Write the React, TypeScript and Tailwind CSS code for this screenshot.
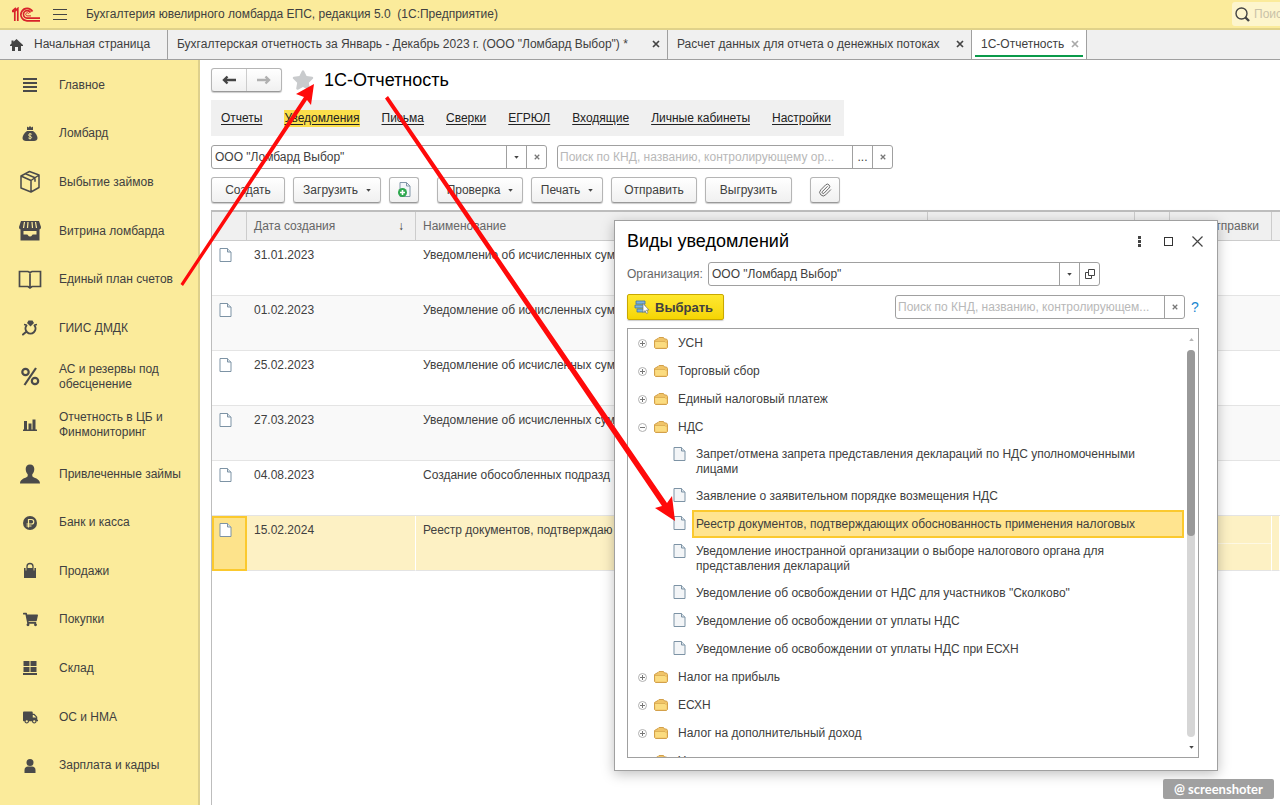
import type { ReactNode } from "react";
import { FaShoppingCart, FaTruck, FaStar } from "react-icons/fa";
import { Paperclip } from "lucide-react";

const INK = "#4a4a4a";

interface MenuItem {
  label: string;
  icon: ReactNode;
}

interface NoticeRow {
  date: string;
  name: string;
  selected?: boolean;
}

interface TreeItem {
  label: string;
  type: "folder" | "open" | "doc";
  selected?: boolean;
}

function Icon({ children, size = 24 }: { children: ReactNode; size?: number }) {
  return (
    <svg width={size} height={size} viewBox="0 0 24 24" fill={INK} aria-hidden="true">
      {children}
    </svg>
  );
}

const menu: MenuItem[] = [
  {
    label: "Главное",
    icon: (
      <Icon>
        <path d="M5 5h14v2H5zM5 9h14v2H5zM5 13h14v2H5zM5 17h14v2H5z" />
      </Icon>
    ),
  },
  {
    label: "Ломбард",
    icon: (
      <Icon>
        <path d="M9 4.500 10.500 5.500 12 4l1.500 1.500L15 4.500V8H9z" />
        <path d="M9 9h6c2.500 2 4.500 4.500 4.500 7 0 2-1.500 3-3.500 3H8c-2 0-3.500-1-3.500-3C4.500 13.500 6.500 11 9 9z" />
        <path d="M13.800 12.300c-1.500-1-3.200-.4-3.200.8 0 1.600 3 .8 3 2.300 0 1.200-2 1.500-3.300.5M12 11v6.500" fill="none" stroke="#fbeb9b" strokeWidth="0.900" />
      </Icon>
    ),
  },
  {
    label: "Выбытие займов",
    icon: (
      <Icon>
        <path
          d="M11.500 1.500 21 5v12.500L13 22 3 18V6zM3 6l10 4.500L21 5M13 10.500V22M7.500 3.800l9.500 4v4"
          fill="none"
          stroke={INK}
          strokeWidth="1.500"
          strokeLinejoin="round"
        />
      </Icon>
    ),
  },
  {
    label: "Витрина ломбарда",
    icon: (
      <Icon>
        <path d="M3 2h18l2 6c0 1.800-1 2.500-2 2.500H3C2 10.500 1 9.800 1 8z" />
        <path d="M6.500 3 5.500 9M10 3 9.500 9M14 3l.5 6M17.500 3l1 6" stroke="#fbeb9b" strokeWidth="1.200" />
        <path d="M2.500 10h19v11.500h-19z" />
        <path d="M5.500 12h13v3.500h-3.500c-1 0-1 2-3 2s-2-2-3-2H5.500z" fill="#fbeb9b" />
      </Icon>
    ),
  },
  {
    label: "Единый план счетов",
    icon: (
      <Icon>
        <path
          d="M1.500 3.500H10l2 1 2-1h8.500v15H14L12 20l-2-1.500H1.500zM12 4.500V20"
          fill="none"
          stroke={INK}
          strokeWidth="1.700"
        />
      </Icon>
    ),
  },
  {
    label: "ГИИС ДМДК",
    icon: (
      <Icon>
        <path d="M9 7l1.500-2.500h4L16 7l-3.500 3.500z" />
        <path d="M8.500 9.500a5 5 0 1 0 8 0M8 16l-3 2.500" fill="none" stroke={INK} strokeWidth="2" strokeLinecap="round" />
        <path d="M6 8.500l2.500.5M19 8.500l-2.500.5" stroke={INK} strokeWidth="1.500" />
      </Icon>
    ),
  },
  {
    label: "АС и резервы под обесценение",
    icon: (
      <Icon>
        <g fill="none" stroke={INK} strokeWidth="2.200">
          <circle cx="7.500" cy="7" r="3.200" />
          <circle cx="17" cy="16" r="3.200" />
          <path d="M18 3 6.500 20" />
        </g>
      </Icon>
    ),
  },
  {
    label: "Отчетность в ЦБ и Финмониторинг",
    icon: (
      <Icon>
        <path d="M6 8h3v9H6zM10.500 10.500h3V17h-3zM14.500 6.500h3V17h-3zM5 16.500h14v1.500H5z" />
      </Icon>
    ),
  },
  {
    label: "Привлеченные займы",
    icon: (
      <Icon>
        <path d="M12 2.500c2.800 0 4.300 1.800 4.300 4.500 0 2.300-.8 4-2 5.200v2.100c1 1.700 7.700 2.200 7.700 7.200H2c0-5 6.700-5.500 7.700-7.200v-2.100c-1.200-1.200-2-2.900-2-5.200 0-2.700 1.500-4.500 4.300-4.500z" />
      </Icon>
    ),
  },
  {
    label: "Банк и касса",
    icon: (
      <Icon>
        <circle cx="12" cy="12" r="7" />
        <path d="M10.500 16.500V8.500h3a2 2 0 0 1 0 4.500H8.500M8.500 15h5" fill="none" stroke="#fbeb9b" strokeWidth="1.200" />
      </Icon>
    ),
  },
  {
    label: "Продажи",
    icon: (
      <Icon>
        <path d="M6 9h12v10H6z" />
        <path d="M9 11V7.500a3 3 0 0 1 6 0V11" fill="none" stroke={INK} strokeWidth="1.300" />
        <path d="M8 9v2.500M16 9v2.500" stroke="#fbeb9b" strokeWidth="0.800" />
      </Icon>
    ),
  },
  { label: "Покупки", icon: <FaShoppingCart size={15} color={INK} /> },
  {
    label: "Склад",
    icon: (
      <Icon>
        <path d="M5.500 5h6v5h-6zM12.500 5h6v5h-6zM5.500 11h6v5h-6zM12.500 11h6v5h-6zM5 17h14v2H5z" />
      </Icon>
    ),
  },
  { label: "ОС и НМА", icon: <FaTruck size={15} color={INK} /> },
  {
    label: "Зарплата и кадры",
    icon: (
      <Icon>
        <circle cx="12" cy="8.500" r="3.500" />
        <path d="M6.500 19v-3c0-2.200 1.500-3.500 3.500-3.500h4c2 0 3.500 1.300 3.500 3.500v3z" />
      </Icon>
    ),
  },
];

const sections = ["Отчеты", "Уведомления", "Письма", "Сверки", "ЕГРЮЛ", "Входящие", "Личные кабинеты", "Настройки"];

const rows: NoticeRow[] = [
  { date: "31.01.2023", name: "Уведомление об исчисленных сум" },
  { date: "01.02.2023", name: "Уведомление об исчисленных сум" },
  { date: "25.02.2023", name: "Уведомление об исчисленных сум" },
  { date: "27.03.2023", name: "Уведомление об исчисленных сум" },
  { date: "04.08.2023", name: "Создание обособленных подразд" },
  { date: "15.02.2024", name: "Реестр документов, подтверждаю", selected: true },
];

const tree: TreeItem[] = [
  { label: "УСН", type: "folder" },
  { label: "Торговый сбор", type: "folder" },
  { label: "Единый налоговый платеж", type: "folder" },
  { label: "НДС", type: "open" },
  { label: "Запрет/отмена запрета представления деклараций по НДС уполномоченными лицами", type: "doc" },
  { label: "Заявление о заявительном порядке возмещения НДС", type: "doc" },
  { label: "Реестр документов, подтверждающих обоснованность применения налоговых", type: "doc", selected: true },
  { label: "Уведомление иностранной организации о выборе налогового органа для представления деклараций", type: "doc" },
  { label: "Уведомление об освобождении от НДС для участников \"Сколково\"", type: "doc" },
  { label: "Уведомление об освобождении от уплаты НДС", type: "doc" },
  { label: "Уведомление об освобождении от уплаты НДС при ЕСХН", type: "doc" },
  { label: "Налог на прибыль", type: "folder" },
  { label: "ЕСХН", type: "folder" },
  { label: "Налог на дополнительный доход", type: "folder" },
  { label: "Уведомления", type: "folder" },
];

function Logo() {
  return (
    <svg width="28" height="15" viewBox="0 0 28 15" fill="none" stroke="#d8222a" strokeWidth="1.700" aria-hidden="true">
      <path d="M0 4.500h2.800V14M2.800 4.500 5.800 1.500V14M0.500 4 4 1" />
      <path d="M20.500 4.500A6.200 6.200 0 1 0 15 13.800H28" />
      <path d="M18.500 5.500A3.800 3.800 0 1 0 15 11.200H28" />
      <path d="M16.800 6.700a1.600 1.600 0 1 0-1.800 2.200h4" strokeWidth="1" />
    </svg>
  );
}

function CloseMark({ color = "#444", size = 8 }: { color?: string; size?: number }) {
  return (
    <svg width={size} height={size} viewBox="0 0 8 8" stroke={color} strokeWidth="1.700" aria-hidden="true">
      <path d="M1 1l6 6M7 1 1 7" />
    </svg>
  );
}

function Caret() {
  return (
    <svg width="5" height="3" viewBox="0 0 6 4" fill="#444" aria-hidden="true">
      <path d="M0 0h6L3 3.500z" />
    </svg>
  );
}

function DocIcon({ filled = false }: { filled?: boolean }) {
  return (
    <svg width="13" height="14" viewBox="0 0 13 14" className="shrink-0" aria-hidden="true">
      <path d="M1 .5h7.500l3.500 3.500v9.500H1z" fill={filled ? "#f3f5f7" : "#fff"} stroke="#7d93a5" />
      <path d="M8.500.5V4H12" fill="#dbe4ea" stroke="#7d93a5" />
    </svg>
  );
}

function FolderIcon() {
  return (
    <svg width="14" height="12" viewBox="0 0 14 12" className="shrink-0" aria-hidden="true">
      <path d="M.5 3.500 4 1.500l1-1h4.500l1 1.500h2l1 1.500v7l-1 1h-11l-1-1z" fill="#f0c468" stroke="#d3a04a" />
      <path d="M1 4.500h10.500l1 1v5H1.500z" fill="#fbdc80" />
      <path d="M1 4.500h10l1.500 1.500" fill="none" stroke="#d9a94f" strokeWidth="0.800" />
    </svg>
  );
}

function Expander({ open }: { open: boolean }) {
  return (
    <svg width="9" height="9" viewBox="0 0 9 9" fill="none" className="block shrink-0" aria-hidden="true">
      <circle cx="4.500" cy="4.500" r="4" stroke="#b0b0b0" />
      <path d={open ? "M2 4.500h5" : "M2 4.500h5M4.500 2v5"} stroke="#777" />
    </svg>
  );
}

function Tab({ label, active = false, className }: { label: string; active?: boolean; className: string }) {
  return (
    <div className={`flex items-stretch border-r border-[#a0a0a0] ${active ? "bg-white px-[3px]" : "px-[3px]"} ${className}`}>
      <div
        className={`flex flex-1 items-center justify-between px-[6px] pb-px ${
          active ? "mb-[2px] border-b-2 border-[#0a9a4a] pt-[4px] pr-[4px]" : "pr-[4px]"
        }`}
      >
        <button type="button" className="whitespace-nowrap">{label}</button>
        <button type="button" aria-label="Закрыть вкладку">
          <CloseMark color={active ? "#aaa" : "#444"} />
        </button>
      </div>
    </div>
  );
}

function ToolButton({ children, label, className = "" }: { children: ReactNode; label?: string; className?: string }) {
  return (
    <button
      type="button"
      aria-label={label}
      className={`flex h-[26px] items-center justify-center gap-2 rounded-[3px] border border-[#b5b5b5] border-b-[#999] bg-linear-to-b from-white to-[#f0f0f0] shadow-[0_1px_1px_#ccc] ${className}`}
    >
      {children}
    </button>
  );
}

const cellButton = "flex w-5 shrink-0 items-center justify-center border-l border-[#a0a0a0]";
const field = "flex h-6 rounded-[3px] border border-[#a0a0a0] bg-white";

function TopBar() {
  return (
    <header className="flex h-[30px] shrink-0 items-center border-b-2 border-[#e0d28a] bg-[#fbeb9b] pl-3">
      <Logo />
      <button type="button" aria-label="Меню" className="ml-[13px] flex flex-col gap-1">
        <span className="h-px w-[14px] bg-[#444]" />
        <span className="h-px w-[14px] bg-[#444]" />
        <span className="h-px w-[14px] bg-[#444]" />
      </button>
      <h1 className="ml-[19px] flex-1 whitespace-pre">Бухгалтерия ювелирного ломбарда ЕПС, редакция 5.0  (1С:Предприятие)</h1>
      <label className="flex h-6 w-12 items-center gap-1 overflow-hidden rounded-l-[3px] bg-[#fdf5cd] pl-[3px]">
        <svg width="15" height="15" viewBox="0 0 15 15" fill="none" stroke="#444" className="shrink-0" aria-hidden="true">
          <circle cx="6.500" cy="6.500" r="5.500" strokeWidth="1.400" />
          <path d="M10.500 10.500 14 14" strokeWidth="2.400" />
        </svg>
        <input type="search" aria-label="Поиск" placeholder="Поиск" className="w-12 shrink-0 bg-transparent placeholder:text-[#c9c2a8]" />
      </label>
    </header>
  );
}

function NotificationDialog() {
  return (
    <section
      role="dialog"
      aria-labelledby="dialog-title"
      className="absolute top-[220px] left-[614px] z-10 flex h-[551px] w-[604px] flex-col border border-[#a0a0a0] bg-white pr-[18px] pb-3 pl-3 shadow-[0_3px_12px_rgba(0,0,0,0.25)]"
    >
      <div className="flex h-[41px] items-center">
        <h2 id="dialog-title" className="flex-1 text-[18px] text-black">Виды уведомлений</h2>
        <div className="-mr-1 flex items-center gap-[19px]">
          <button type="button" aria-label="Еще" className="flex w-3 justify-center">
            <svg width="3" height="11" fill="#444" aria-hidden="true">
              <path d="M0 0h3v3H0zM0 4h3v3H0zM0 8h3v3H0z" />
            </svg>
          </button>
          <button type="button" aria-label="Развернуть" className="size-[9px] border border-[#333]" />
          <button type="button" aria-label="Закрыть">
            <svg width="11" height="11" viewBox="0 0 11 11" stroke="#444" strokeWidth="1.200" aria-hidden="true">
              <path d="M.5.5l10 10M10.500.5l-10 10" />
            </svg>
          </button>
        </div>
      </div>

      <div className="flex items-center">
        <label htmlFor="dialog-org" className="w-[81px] text-[#666]">Организация:</label>
        <div className={`${field} w-[392px]`}>
          <select id="dialog-org" className="min-w-0 flex-1 appearance-none px-[3px]">
            <option>ООО "Ломбард Выбор"</option>
          </select>
          <span className={cellButton}><Caret /></span>
          <button type="button" aria-label="Открыть" className={cellButton}>
            <svg width="10" height="10" viewBox="0 0 10 10" fill="none" stroke="#444" aria-hidden="true">
              <path d="M3.500.5h6v6h-6zM3 3.500H.5v6h6V7" />
            </svg>
          </button>
        </div>
      </div>

      <div className="mt-2 flex items-center">
        <button
          type="button"
          className="flex h-[26px] w-[97px] items-center gap-[5px] rounded-[2px] border border-[#c9a800] bg-linear-to-b from-[#ffe82e] to-[#f5d500] pl-[6px] text-[13px] font-bold shadow-[0_1px_1px_#ccc]"
        >
          <svg width="16" height="14" viewBox="0 0 16 14" aria-hidden="true">
            <path d="M2 1h9v3H2zM1 5h10v3H1zM3 9h9v3H3z" fill="#7fb2dc" stroke="#3f75a3" strokeWidth="0.800" />
            <path d="M9 3.500v9l2-2 1.500 3 1.500-.8-1.500-2.700H15z" fill="#fff" stroke="#777" strokeWidth="0.700" />
          </svg>
          Выбрать
        </button>
        <div className={`${field} ml-auto w-[290px]`}>
          <input
            type="text"
            aria-label="Поиск вида уведомления"
            placeholder="Поиск по КНД, названию, контролирующем..."
            className="min-w-0 flex-1 px-[2px] text-ellipsis placeholder:text-[#b8b8b8]"
          />
          <button type="button" aria-label="Очистить" className={cellButton}><CloseMark color="#777" size={6} /></button>
        </div>
        <a href="#help" aria-label="Справка" className="ml-[6px] w-[8px] text-[14px] text-[#1a86cf]">?</a>
      </div>

      <div className="mt-[8px] flex min-h-0 flex-1 border border-[#a0a0a0]">
        <ul className="min-w-0 flex-1 overflow-hidden">
          {tree.map((item) => (
            <TreeRow key={item.label} item={item} />
          ))}
        </ul>
        {/* Scrollbar */}
        <div className="flex w-[14px] flex-col items-center pt-[9px] pb-[8px]">
          <svg width="5" height="3" viewBox="0 0 6 4" fill="#b5b5b5" aria-hidden="true">
            <path d="M0 4h6L3 0z" />
          </svg>
          <div className="my-[9px] w-2 flex-1 rounded-full bg-[#d6d6d6]">
            <div className="h-[48%] rounded-full bg-[#999]" />
          </div>
          <Caret />
        </div>
      </div>
    </section>
  );
}

function TreeRow({ item }: { item: TreeItem }) {
  if (item.type === "doc") {
    return (
      <li className="flex items-start pl-[45px]">
        <span className="mt-[6px]"><DocIcon filled /></span>
        <button
          type="button"
          className={`ml-[6px] min-h-7 flex-1 border-2 pt-[4px] pr-[6px] pb-[3px] pl-[2px] text-left leading-[15px] ${
            item.selected ? "border-[#fbc92e] bg-[#ffe48f]" : "border-transparent"
          }`}
        >
          {item.label}
        </button>
      </li>
    );
  }
  return (
    <li className="flex h-7 items-center pl-[10px]">
      <button type="button" aria-label="Раскрыть"><Expander open={item.type === "open"} /></button>
      <span className="ml-[7px]"><FolderIcon /></span>
      <span className="ml-[10px]">{item.label}</span>
    </li>
  );
}

export default function App() {
  return (
    <div className="relative flex h-screen flex-col overflow-hidden bg-white font-['Liberation_Sans',Arial,sans-serif] text-[12px] leading-[15px] text-[#404040]">
      <TopBar />

      <nav aria-label="Вкладки" className="flex h-[30px] shrink-0 border-b border-[#a0a0a0] bg-[#f0f0f0]">
        <button type="button" className="flex w-[168px] items-center gap-[11px] border-r border-[#a0a0a0] pl-[10px]">
          <svg width="13" height="12" viewBox="0 0 13 12" fill="#444" aria-hidden="true">
            <path d="M6.500 0 13 6v1h-2v5H8V8H5v4H2V7H0V6l1.500-1.400V1.500h2v1.200z" />
          </svg>
          Начальная страница
        </button>
        <Tab className="w-[500px]" label={'Бухгалтерская отчетность за Январь - Декабрь 2023 г. (ООО "Ломбард Выбор") *'} />
        <Tab className="w-[304px]" label="Расчет данных для отчета о денежных потоках" />
        <Tab className="w-[115px]" label="1С-Отчетность" active />
      </nav>

      <div className="flex min-h-0 flex-1">
        <aside className="flex w-[200px] shrink-0 flex-col border-r-2 border-[#ded08c] bg-[#fbeb9b] pt-px pb-[15px]">
          {menu.map((item) => (
            <a key={item.label} href="#section" className="flex flex-1 items-center pl-[18px]">
              <span className="flex w-6 justify-center">{item.icon}</span>
              <span className="ml-[17px] w-[130px]">{item.label}</span>
            </a>
          ))}
        </aside>

        <main className="flex min-w-0 flex-1 flex-col pt-2 pl-[11px]">
          <div className="flex items-center">
            <div className="flex h-6 w-[71px] rounded-[3px] border border-[#b5b5b5] border-b-[#999] bg-linear-to-b from-white to-[#f0f0f0] shadow-[0_1px_1px_#ccc]">
              <button type="button" aria-label="Назад" className="flex flex-1 items-center justify-center border-r border-[#ccc]">
                <svg width="14" height="10" viewBox="0 0 14 10" fill="none" stroke="#444" strokeWidth="2.400" aria-hidden="true">
                  <path d="M14 5H2M5.500 1.500 2 5l3.500 3.500" />
                </svg>
              </button>
              <button type="button" aria-label="Вперед" className="flex flex-1 items-center justify-center">
                <svg width="14" height="10" viewBox="0 0 14 10" fill="none" stroke="#b0b0b0" strokeWidth="2.400" aria-hidden="true">
                  <path d="M0 5h12M8.500 1.500 12 5 8.500 8.500" />
                </svg>
              </button>
            </div>
            <button type="button" aria-label="В избранное" className="ml-[10px]"><FaStar size={22} color="#c9cbcd" /></button>
            <h2 className="ml-[10px] text-[18px] text-black">1С-Отчетность</h2>
          </div>

          <nav aria-label="Разделы" className="mt-2 flex h-9 items-center gap-[22px] self-start bg-[#f0f0f0] pr-[13px] pl-[10px]">
            {sections.map((name) => (
              <a key={name} href="#tab" className={`py-px text-[#222] underline underline-offset-2 ${name === "Уведомления" ? "bg-[#fbdf4b] no-underline" : ""}`}>
                {name}
              </a>
            ))}
          </nav>

          <div className="mt-[9px] flex gap-[10px]">
            <div className={`${field} w-[336px]`}>
              <select aria-label="Организация" className="min-w-0 flex-1 appearance-none px-[3px]">
                <option>ООО "Ломбард Выбор"</option>
              </select>
              <span className={cellButton}><Caret /></span>
              <button type="button" aria-label="Очистить" className={cellButton}><CloseMark color="#777" size={6} /></button>
            </div>
            <div className={`${field} w-[336px]`}>
              <input
                type="text"
                aria-label="Поиск"
                placeholder="Поиск по КНД, названию, контролирующему ор..."
                className="min-w-0 flex-1 px-[2px] text-ellipsis placeholder:text-[#b8b8b8]"
              />
              <button type="button" className={cellButton}>...</button>
              <button type="button" aria-label="Очистить" className={cellButton}><CloseMark color="#777" size={6} /></button>
            </div>
          </div>

          <div className="mt-2 flex gap-2">
            <ToolButton className="w-[74px]">Создать</ToolButton>
            <ToolButton className="w-[88px]">Загрузить <Caret /></ToolButton>
            <ToolButton className="w-[30px]" label="Создать из файла">
              <svg width="15" height="16" viewBox="0 0 15 16" aria-hidden="true">
                <path d="M3 .5h6.500L13 4v10.500H3z" fill="#f3f6f9" stroke="#8297a9" />
                <path d="M9.500.5V4H13" fill="none" stroke="#8297a9" />
                <circle cx="5.500" cy="10.500" r="4.500" fill="#2fa84f" />
                <path d="M5.500 8v5M3 10.500h5" stroke="#fff" strokeWidth="1.600" />
              </svg>
            </ToolButton>
            <ToolButton className="ml-[10px] w-[86px]">Проверка <Caret /></ToolButton>
            <ToolButton className="w-[72px]">Печать <Caret /></ToolButton>
            <ToolButton className="w-[86px]">Отправить</ToolButton>
            <ToolButton className="w-[87px]">Выгрузить</ToolButton>
            <ToolButton className="ml-[10px] w-[30px]" label="Вложения">
              <Paperclip size={14} strokeWidth={1.5} color="#555" />
            </ToolButton>
          </div>

          <div className="mt-[7px] min-h-0 flex-1 overflow-hidden border-t-2 border-l border-[#bdbdbd]">
            <table className="w-full table-fixed border-separate border-spacing-0">
              <colgroup>
                <col className="w-[35px]" />
                <col className="w-[169px]" />
                <col className="w-[512px]" />
                <col className="w-[207px]" />
                <col className="w-[35px]" />
                <col className="w-[102px]" />
                <col />
              </colgroup>
              <thead>
                <tr className="h-[29px] bg-[#f0f0f0] text-[#666] [&>th]:border-r [&>th]:border-b [&>th]:border-[#ccc] [&>th]:px-[7px] [&>th]:text-left [&>th]:font-normal [&>th:last-child]:border-r-0">
                  <th />
                  <th>
                    <span className="flex items-center justify-between pr-1">
                      Дата создания <span className="text-[#333]">↓</span>
                    </span>
                  </th>
                  <th>Наименование</th>
                  <th />
                  <th />
                  <th><span className="flex justify-end pr-[5px] whitespace-nowrap">Дата отправки</span></th>
                  <th />
                </tr>
              </thead>
              <tbody>
                {rows.map((row, i) => (
                  <tr
                    key={row.date}
                    className={`h-[55px] align-top [&>td]:overflow-hidden [&>td]:border-b [&>td]:border-[#e4e4e4] [&>td]:px-[7px] [&>td]:pt-[7px] [&>td]:whitespace-nowrap ${
                      row.selected
                        ? "bg-[#fdf1c4] [&>td]:border-r [&>td]:border-r-white"
                        : i % 2 === 1
                          ? "bg-[#f9f9f9]"
                          : "bg-white"
                    }`}
                  >
                    <td className={row.selected ? "bg-[#fde38b] outline-2 -outline-offset-2 outline-[#fbc92e]" : ""}><DocIcon /></td>
                    <td>{row.date}</td>
                    <td>{row.name}</td>
                    <td />
                    <td />
                    <td className={row.selected ? "bg-linear-to-b from-transparent from-50% via-white via-50% to-transparent to-[52%]" : ""} />
                    <td />
                  </tr>
                ))}
              </tbody>
            </table>
          </div>
        </main>
      </div>

      <NotificationDialog />

      {/* Pointer arrows over the windows */}
      <svg className="pointer-events-none absolute inset-0 z-20 size-full" fill="#ff0a0a" aria-hidden="true">
        <path d="M180.500 284 304 97l-8-3 18-10-3 21-4-5L183 286z" />
        <path d="M385 98.500 662 506l-7 2 20 13-3-25-5 7L388 96z" />
      </svg>

      <div className="absolute right-[6px] bottom-[6px] z-20 flex h-5 w-[111px] items-center justify-center gap-[3px] rounded-[2px] bg-[#a0a0a0] font-[Lato,sans-serif] text-[13px] font-bold text-white">
        <span>@</span>
        <span>screenshoter</span>
      </div>
    </div>
  );
}
